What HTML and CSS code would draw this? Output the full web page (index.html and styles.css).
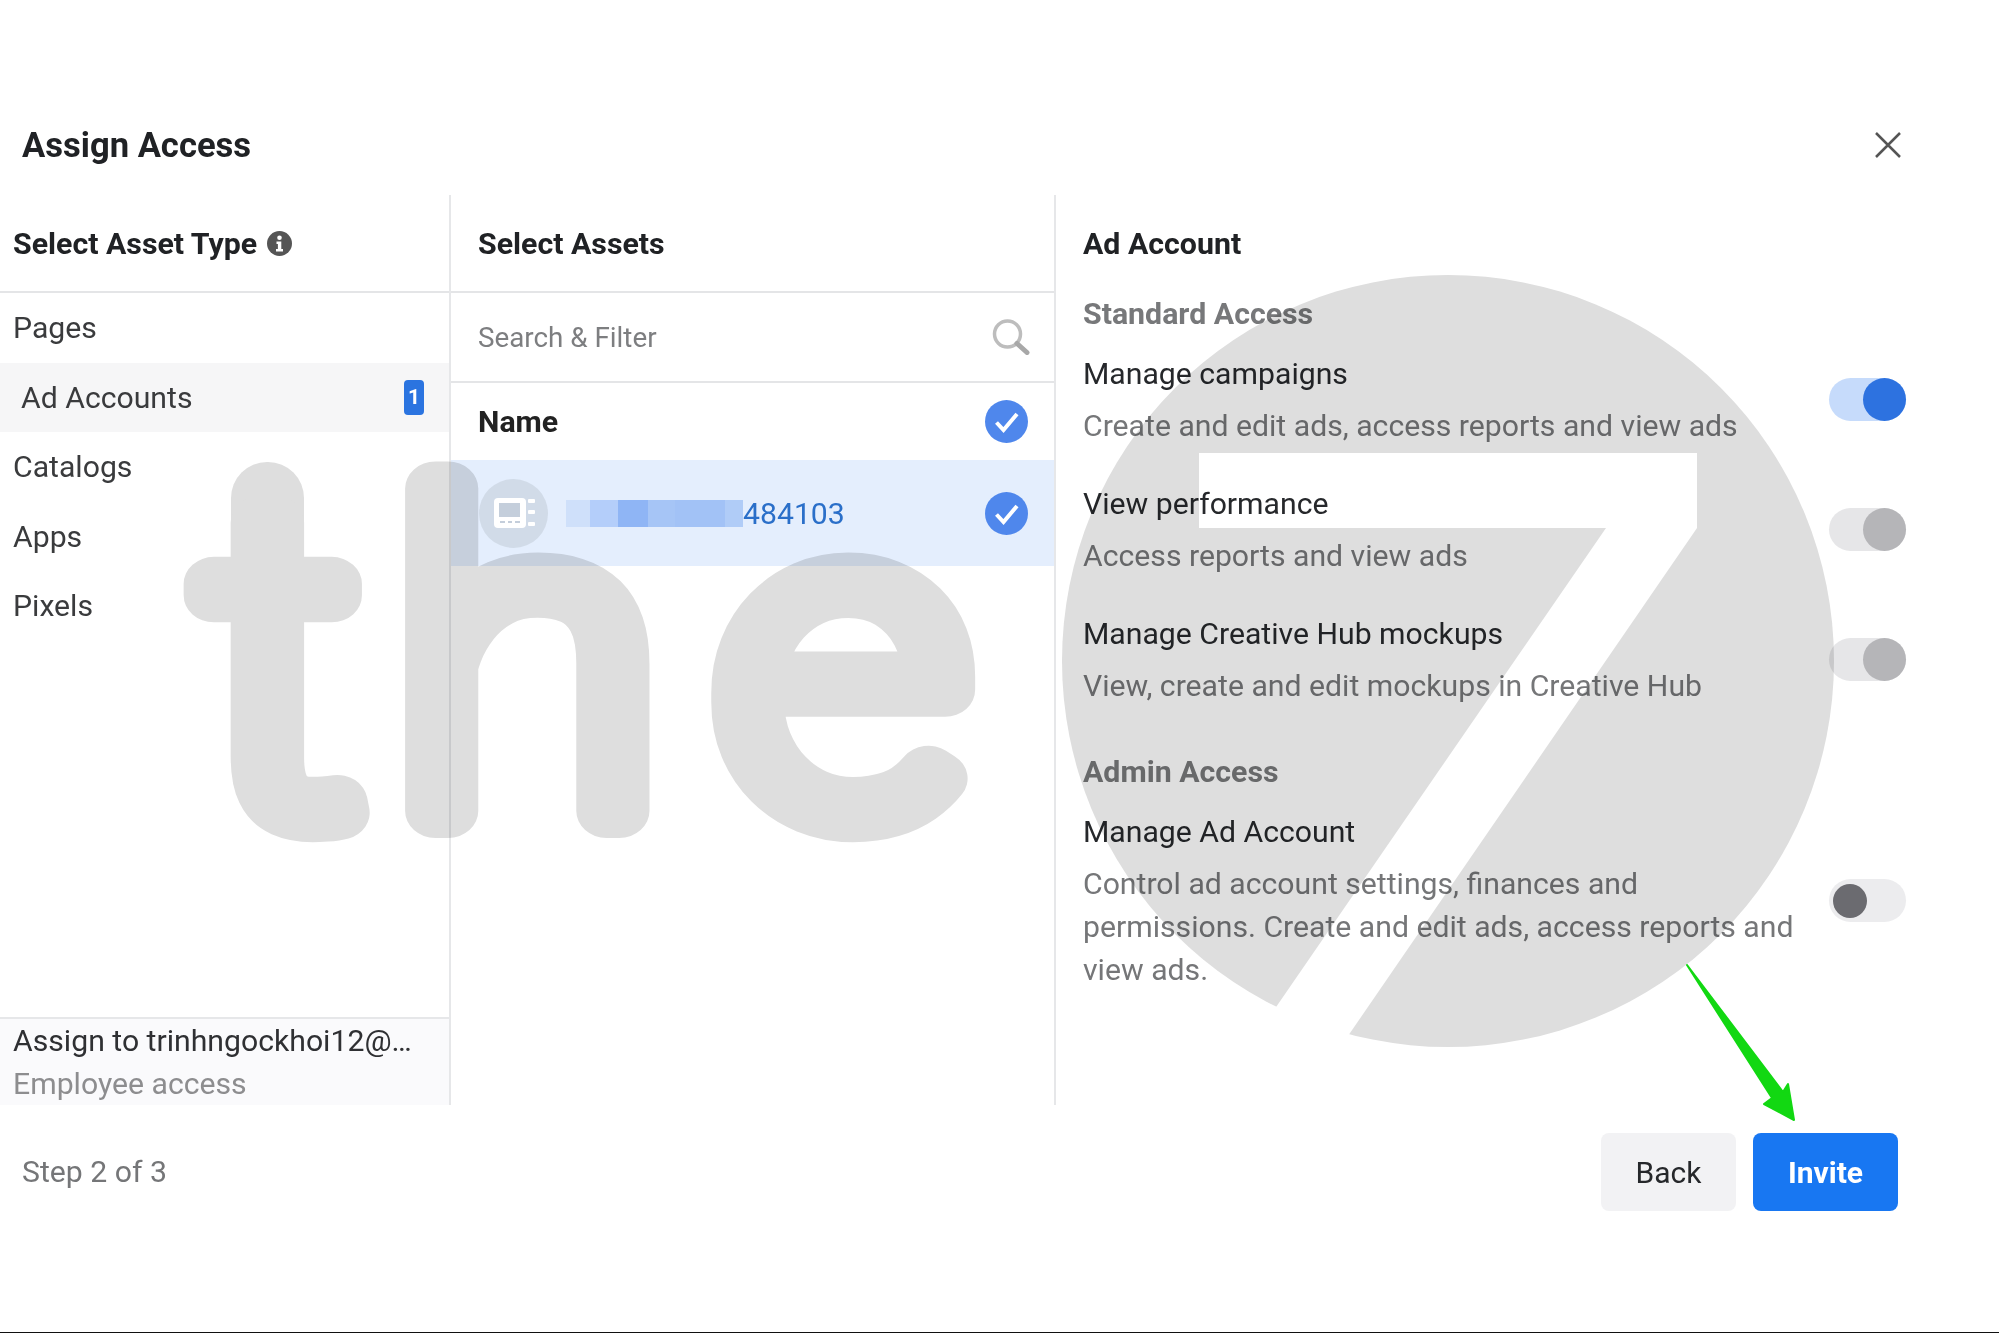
FILE: index.html
```html
<!DOCTYPE html>
<html lang="en">
<head>
<meta charset="utf-8">
<title>Assign Access</title>
<link rel="stylesheet" href="styles.css">
</head>
<body>
<div class="page">
  <header class="top">
    <h1 class="title">Assign Access</h1>
    <svg class="close" width="28" height="28" viewBox="0 0 28 28"><path d="M2 2 L26 26 M26 2 L2 26"/></svg>
  </header>

  <main class="panels">
    <section class="col col-types">
      <div class="col-head line">
        <span class="head-text">Select Asset Type</span>
        <svg class="info" width="25" height="25" viewBox="0 0 25 25"><circle cx="12.5" cy="12.5" r="12.5" fill="#555"/><circle cx="12.5" cy="6.8" r="2.3" fill="#fff"/><path d="M9.5 10.5h4.8v7.5h1.7v2.5H9v-2.5h1.9v-5H9.5z" fill="#fff"/></svg>
      </div>
      <ul class="types">
        <li class="type">Pages</li>
        <li class="type active"><span>Ad Accounts</span><b class="badge">1</b></li>
        <li class="type">Catalogs</li>
        <li class="type">Apps</li>
        <li class="type">Pixels</li>
      </ul>
      <div class="assign">
        <div class="assign-to">Assign to trinhngockhoi12@…</div>
        <div class="assign-role">Employee access</div>
      </div>
    </section>

    <section class="col col-assets">
      <div class="col-head line col-head-assets"><span class="head-text">Select Assets</span></div>
      <div class="search line">
        <span>Search &amp; Filter</span>
        <svg class="search-icon" width="38" height="36" viewBox="0 0 38 36"><circle cx="15.5" cy="15" r="13" /><path d="M25 24.5 L35 33.5"/></svg>
      </div>
      <div class="name-row">
        <span class="name-label">Name</span>
        <svg class="check" width="43" height="43" viewBox="0 0 43 43"><circle cx="21.5" cy="21.5" r="21.5"/><path d="M11.5 22.5 L18.5 30 L32 14"/></svg>
      </div>
      <div class="asset-row">
        <span class="avatar">
          <svg width="42" height="34" viewBox="0 0 42 34"><rect x="1" y="2" width="32" height="30" rx="4" fill="#fff"/><rect x="6" y="7" width="21" height="14" fill="#c4cedb"/><path d="M7 26h5M15 26h4M22 26h5" stroke="#c4cedb" stroke-width="2"/><rect x="35" y="3" width="7" height="4" rx="1" fill="#fff"/><rect x="35" y="14" width="7" height="4" rx="1" fill="#fff"/><rect x="35" y="26" width="7" height="4" rx="1" fill="#fff"/></svg>
        </span>
        <span class="redacted"><i class="r1"></i><i class="r2"></i><i class="r3"></i><i class="r4"></i><i class="r5"></i><i class="r6"></i></span>
        <span class="asset-id">484103</span>
        <svg class="check" width="43" height="43" viewBox="0 0 43 43"><circle cx="21.5" cy="21.5" r="21.5"/><path d="M11.5 22.5 L18.5 30 L32 14"/></svg>
      </div>
    </section>

    <section class="col-perms">
      <div class="col-head"><span class="head-text">Ad Account</span></div>
      <h3 class="group">Standard Access</h3>
      <div class="perm">
        <div class="perm-text"><div class="perm-name">Manage campaigns</div><div class="perm-desc">Create and edit ads, access reports and view ads</div></div>
        <span class="toggle on"><i></i></span>
      </div>
      <div class="perm">
        <div class="perm-text"><div class="perm-name">View performance</div><div class="perm-desc">Access reports and view ads</div></div>
        <span class="toggle fixed"><i></i></span>
      </div>
      <div class="perm">
        <div class="perm-text"><div class="perm-name">Manage Creative Hub mockups</div><div class="perm-desc">View, create and edit mockups in Creative Hub</div></div>
        <span class="toggle fixed"><i></i></span>
      </div>
      <h3 class="group group-admin">Admin Access</h3>
      <div class="perm perm-admin">
        <div class="perm-text"><div class="perm-name">Manage Ad Account</div><div class="perm-desc">Control ad account settings, finances and permissions. Create and edit ads, access reports and view ads.</div></div>
        <span class="toggle off"><i></i></span>
      </div>
    </section>
  </main>

  <footer class="bottom">
    <span class="step">Step 2 of 3</span>
    <div class="actions">
      <button class="btn btn-back">Back</button>
      <button class="btn btn-invite">Invite</button>
    </div>
  </footer>

  <svg class="watermark" width="1999" height="1333" viewBox="0 0 1999 1333">
    <defs>
      <mask id="seven" maskUnits="userSpaceOnUse" x="0" y="0" width="1999" height="1333">
        <rect width="1999" height="1333" fill="#fff"/>
        <path d="M1199 453H1697V528L1304 1100H1212L1606 528H1199Z" fill="#000"/>
      </mask>
    </defs>
    <rect x="231" y="462" width="73" height="140" rx="36" fill="#dedede"/>
    <text class="wm-text" y="811"><tspan x="183">t</tspan><tspan x="352.6">h</tspan><tspan x="643.8">e</tspan></text>
    <circle cx="1448" cy="661" r="386" fill="#dedede" mask="url(#seven)"/>
  </svg>

  <svg class="arrow" width="1999" height="1333" viewBox="0 0 1999 1333">
    <path d="M1687 965 L1783 1092 L1788 1084 L1794 1120 L1764 1104 L1772 1098 Z"/>
  </svg>
</div>
</body>
</html>
```

FILE: styles.css
```css
* { box-sizing: border-box; }
html, body { margin: 0; padding: 0; background: #fff; }
body { font-family: Roboto, "Liberation Sans", sans-serif; color: #1c1e21; }
.page { position: relative; width: 1999px; height: 1333px; overflow: hidden; display: flex; flex-direction: column; border-bottom: 1px solid #111; background: #fff; filter: blur(0.5px); }

.top { height: 195px; flex: none; padding: 95px 97px 0 22px; display: flex; align-items: center; justify-content: space-between; }
.title { margin: 0; font-size: 34.6px; font-weight: 700; color: #202225; }
.close path { stroke: #555; stroke-width: 2.5; fill: none; }

.panels { flex: none; height: 910px; display: grid; grid-template-columns: 451px 605px 1fr; }
.col { display: flex; flex-direction: column; border-right: 2px solid #e6e7e9; }
.col-head { height: 98px; display: flex; align-items: center; gap: 10px; flex: none; }
.line { border-bottom: 2px solid #e4e5e7; }
.head-text { font-size: 30.3px; font-weight: 700; color: #202225; }
.col-types .col-head { padding-left: 13px; }
.col-head-assets { padding-left: 27px; }
.col-perms .col-head { height: 97px; }
.info { flex: none; }

.types { list-style: none; margin: 0; padding: 0; flex: 1; }
.type { height: 69.5px; display: flex; align-items: center; padding-left: 13px; font-size: 30.2px; color: #3a3b3d; }
.type.active { background: #f6f6f7; padding: 0 25px 0 21px; justify-content: space-between; }
.badge { width: 20px; height: 35px; border-radius: 4px; background: #2b74e0; color: #fff; font-size: 21px; font-weight: 700; display: flex; align-items: center; justify-content: center; }

.assign { height: 88px; flex: none; border-top: 2px solid #e6e7e9; background: #fafafc; padding: 0 0 0 13px; }
.assign-to { font-size: 30.2px; line-height: 43px; color: #2f3033; }
.assign-role { font-size: 30.2px; line-height: 43px; color: #8d8d8f; }

.search { height: 90px; padding: 0 24px 0 27px; flex: none; display: flex; align-items: center; justify-content: space-between; font-size: 27.8px; color: #7d7e80; }
.search-icon circle, .search-icon path { fill: none; stroke: #bdbdbd; stroke-width: 3.5; }
.search-icon path { stroke: #a8a8a8; stroke-width: 5; stroke-linecap: round; }
.name-row { height: 77px; flex: none; padding: 0 26px 0 27px; display: flex; align-items: center; justify-content: space-between; }
.name-label { font-size: 30.3px; font-weight: 700; color: #222; }
.check { flex: none; }
.check circle { fill: #4f87ec; }
.check path { fill: none; stroke: #fff; stroke-width: 4; }
.asset-row { height: 106px; flex: none; background: #e4eefd; padding: 0 26px 0 28px; display: flex; align-items: center; }
.avatar { width: 69px; height: 69px; border-radius: 50%; background: #d1dbe8; display: flex; align-items: center; justify-content: center; flex: none; }
.redacted { display: flex; height: 27px; margin-left: 18px; }
.redacted i { display: block; height: 100%; }
.r1 { width: 24px; background: #cfe0fa; }
.r2 { width: 28px; background: #b4cefa; }
.r3 { width: 30px; background: #8fb5f5; }
.r4 { width: 27px; background: #a6c5f6; }
.r5 { width: 50px; background: #a2c2f6; }
.r6 { width: 18px; background: #b0ccf7; }
.asset-id { font-size: 30.2px; color: #2a6fc9; flex: 1; }

.col-perms { padding-left: 27px; padding-right: 93px; }
.group { margin: 0 0 17px; font-size: 30.3px; line-height: 43px; font-weight: 700; color: #77787a; }
.group-admin { margin-top: 43px; }
.perm { display: flex; align-items: center; justify-content: space-between; margin-bottom: 35px; }
.perm-text { width: 730px; }
.perm-name { font-size: 30.2px; line-height: 43px; margin-bottom: 9px; color: #26282b; }
.perm-desc { font-size: 30.2px; line-height: 43px; color: #757678; }
.toggle { width: 77px; height: 43px; border-radius: 22px; display: flex; justify-content: flex-end; flex: none; background: #e6e6e8; margin-bottom: 1px; }
.toggle i { display: block; width: 43px; height: 43px; border-radius: 50%; background: #b5b5b8; }
.toggle.on { background: #c6dbfb; }
.toggle.on i { background: #2d72e0; }
.toggle.off { background: #ececee; justify-content: flex-start; align-items: center; padding-left: 4px; margin-bottom: 0; }
.toggle.off i { width: 34px; height: 34px; background: #6b6b70; }

.bottom { flex: 1; display: flex; align-items: flex-start; justify-content: space-between; padding: 28px 101px 0 22px; }
.step { font-size: 30.2px; line-height: 78px; color: #757678; }
.actions { display: flex; gap: 17px; }
.btn { height: 78px; border: 0; border-radius: 8px; font-family: inherit; font-size: 30px; }
.btn-back { width: 135px; background: #f2f2f4; color: #26282b; }
.btn-invite { width: 145px; background: #1877f2; color: #fff; font-weight: 700; }

.watermark { position: absolute; left: 0; top: 0; mix-blend-mode: multiply; pointer-events: none; }
.wm-text { font-family: Roboto, "Liberation Sans", sans-serif; font-size: 430px; font-weight: 100; fill: #dedede; stroke: #dedede; stroke-width: 54px; stroke-linejoin: round; transform: scaleX(1.12); }
.arrow { position: absolute; left: 0; top: 0; pointer-events: none; }
.arrow path { fill: #12d812; stroke: #12d812; stroke-width: 2; stroke-linejoin: round; }
```
